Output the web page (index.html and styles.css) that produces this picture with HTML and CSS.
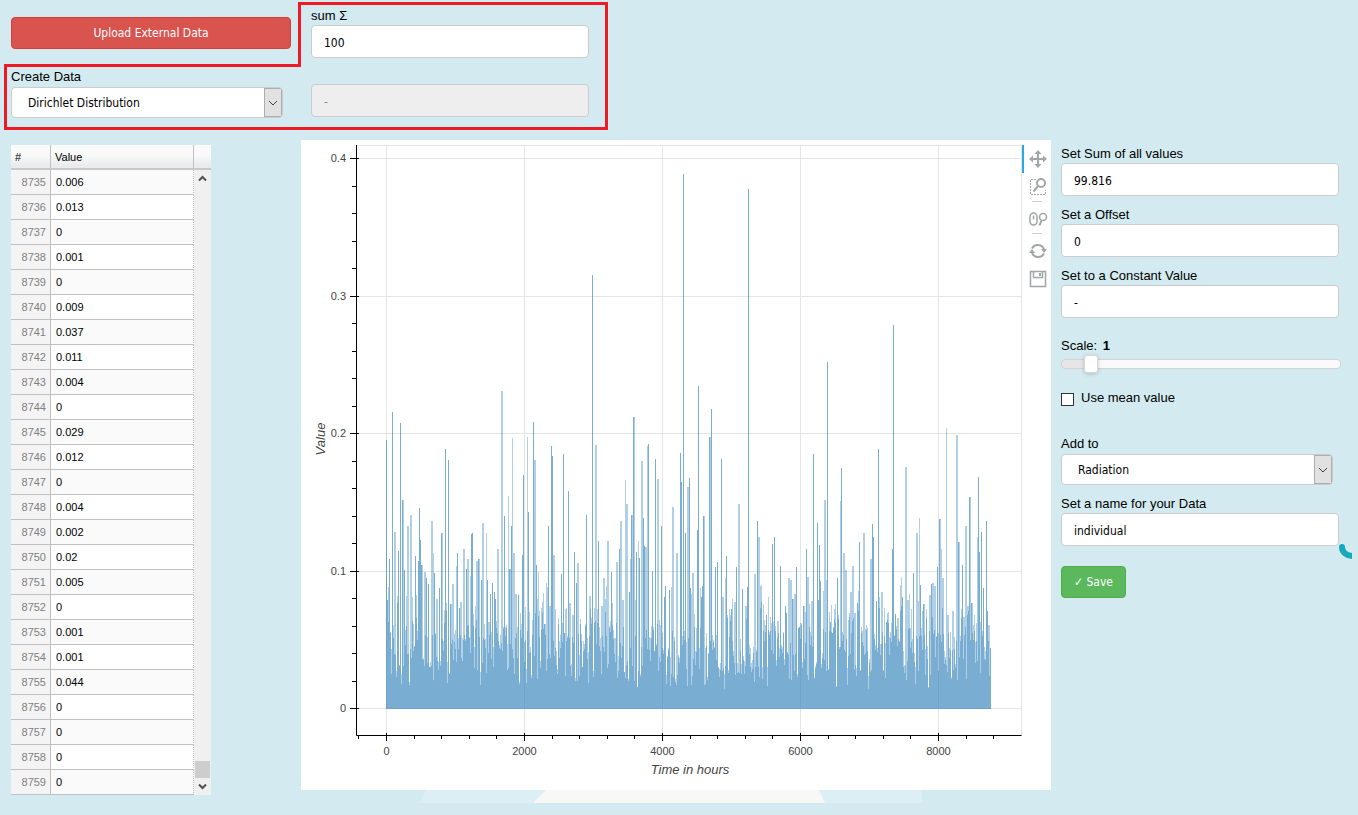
FILE: index.html
```html
<!DOCTYPE html>
<html lang="en">
<head>
    <meta charset="UTF-8">
    <meta name="viewport" content="width=device-width, initial-scale=1.0">
    <title>Create Data</title>
    <link rel="stylesheet" href="styles.css">
</head>
<body>
    <header class="create">
        <div class="create-left">
            <button class="btn btn-danger" type="button">Upload External Data</button>
            <div class="field">
                <label for="distribution">Create Data</label>
                <div class="select-box">
                    <select id="distribution"><option>Dirichlet Distribution</option></select>
                    <span class="select-arrow"><svg width="10" height="6" viewBox="0 0 10 6"><path d="M1 1l4 4 4-4"/></svg></span>
                </div>
            </div>
        </div>
        <div class="create-right">
            <div class="field">
                <label for="sum">sum Σ</label>
                <input class="text" id="sum" type="text" value="100">
            </div>
            <input class="text" type="text" value="-" aria-label="Second parameter" disabled>
        </div>
        <svg class="outline" width="610" height="132" viewBox="0 0 610 132">
            <path d="M299.5 3.5H606.5V128.5H5.5V65.5H299.5Z"/>
        </svg>
    </header>

    <main class="main">
        <div class="grid">
            <table class="data">
                <thead>
                    <tr><th class="index">#</th><th>Value</th></tr>
                </thead>
                <tbody>
                    <tr><td>8735</td><td>0.006</td></tr>
                    <tr><td>8736</td><td>0.013</td></tr>
                    <tr><td>8737</td><td>0</td></tr>
                    <tr><td>8738</td><td>0.001</td></tr>
                    <tr><td>8739</td><td>0</td></tr>
                    <tr><td>8740</td><td>0.009</td></tr>
                    <tr><td>8741</td><td>0.037</td></tr>
                    <tr><td>8742</td><td>0.011</td></tr>
                    <tr><td>8743</td><td>0.004</td></tr>
                    <tr><td>8744</td><td>0</td></tr>
                    <tr><td>8745</td><td>0.029</td></tr>
                    <tr><td>8746</td><td>0.012</td></tr>
                    <tr><td>8747</td><td>0</td></tr>
                    <tr><td>8748</td><td>0.004</td></tr>
                    <tr><td>8749</td><td>0.002</td></tr>
                    <tr><td>8750</td><td>0.02</td></tr>
                    <tr><td>8751</td><td>0.005</td></tr>
                    <tr><td>8752</td><td>0</td></tr>
                    <tr><td>8753</td><td>0.001</td></tr>
                    <tr><td>8754</td><td>0.001</td></tr>
                    <tr><td>8755</td><td>0.044</td></tr>
                    <tr><td>8756</td><td>0</td></tr>
                    <tr><td>8757</td><td>0</td></tr>
                    <tr><td>8758</td><td>0</td></tr>
                    <tr><td>8759</td><td>0</td></tr>
                </tbody>
            </table>
            <div class="scroll">
                <div class="scroll-head"></div>
                <button class="scroll-btn" type="button" aria-label="Scroll up"><svg width="9" height="7" viewBox="0 0 9 7"><path d="M1 5.5l3.500-3.500 3.500 3.500"/></svg></button>
                <div class="scroll-track"><div class="scroll-thumb"></div></div>
                <button class="scroll-btn" type="button" aria-label="Scroll down"><svg width="9" height="7" viewBox="0 0 9 7"><path d="M1 1.500l3.500 3.500 3.500-3.500"/></svg></button>
            </div>
        </div>

        <div class="chart-col">
            <div class="chart">
                <svg class="plot" viewBox="0 0 721 650">
                    <path class="gridline" id="gridlines"/>
                    <path class="series" id="series"/>
                    <path class="series soft" id="seriesSoft"/>
                    <path class="axis" id="axes"/>
                    <g id="ticks" class="tick-labels"></g>
                    <text class="axis-title" x="389" y="634">Time in hours</text>
                    <text class="axis-title" transform="translate(24 299) rotate(-90)">Value</text>
                </svg>
                <div class="toolbar">
                    <button class="tool active" type="button" aria-label="Pan">
                        <svg width="18" height="18" viewBox="0 0 18 18"><path class="thick" d="M9 3v12M3 9h12"/><path class="solid" d="M9 0l3.500 4h-7zM9 18l3.500-4h-7zM0 9l4-3.500v7zM18 9l-4-3.500v7z"/></svg>
                    </button>
                    <button class="tool" type="button" aria-label="Box Zoom">
                        <svg width="18" height="18" viewBox="0 0 18 18"><path class="dash" d="M7 1.500H1.500v15h15V12"/><circle class="thick" cx="12" cy="5" r="4"/><path class="thick" d="M9 8l-4.500 5.500"/></svg>
                    </button>
                    <span class="sep"></span>
                    <button class="tool" type="button" aria-label="Wheel Zoom">
                        <svg width="20" height="16" viewBox="0 0 20 16"><rect class="line" x="2" y="2" width="7" height="12" rx="3.500"/><path class="line" d="M5.500 4.500v4"/><circle class="line" cx="15" cy="6" r="3.500"/><path class="thick" d="M13.500 9.500l-2 5"/></svg>
                    </button>
                    <span class="sep"></span>
                    <button class="tool" type="button" aria-label="Reset">
                        <svg width="18" height="18" viewBox="0 0 18 18"><path class="thick" d="M3 6.500a6.500 6.500 0 0 1 12 1M15 11.500a6.500 6.500 0 0 1-12-1"/><path class="solid" d="M12 7h6l-3 4zM0 11h6l-3-4z"/></svg>
                    </button>
                    <button class="tool" type="button" aria-label="Save plot">
                        <svg width="18" height="18" viewBox="0 0 18 18"><path class="line" d="M1.500 1.500h15v15h-15zM4.500 1.500v6h9v-6"/><path class="solid" d="M10 3h2v3h-2z"/></svg>
                    </button>
                </div>
            </div>
            <svg class="backdrop" viewBox="0 0 750 13">
                <path class="band" d="M125 0H620L622 13H118Z"/>
                <path class="sheet" d="M245 0H518L524 13H232Z"/>
            </svg>
        </div>

        <form class="panel">
            <div class="field">
                <label for="total">Set Sum of all values</label>
                <input class="text" id="total" type="text" value="99.816">
            </div>
            <div class="field">
                <label for="offset">Set a Offset</label>
                <input class="text" id="offset" type="text" value="0">
            </div>
            <div class="field">
                <label for="constant">Set to a Constant Value</label>
                <input class="text" id="constant" type="text" value="-">
            </div>
            <div class="field scale">
                <label for="scale">Scale: <b>1</b></label>
                <input class="slider" id="scale" type="range" min="0" max="12" value="1">
            </div>
            <div class="check">
                <input id="mean" type="checkbox">
                <label for="mean">Use mean value</label>
            </div>
            <div class="field">
                <label for="addTo">Add to</label>
                <div class="select-box">
                    <select id="addTo"><option>Radiation</option></select>
                    <span class="select-arrow"><svg width="10" height="6" viewBox="0 0 10 6"><path d="M1 1l4 4 4-4"/></svg></span>
                </div>
            </div>
            <div class="field name">
                <label for="name">Set a name for your Data</label>
                <input class="text" id="name" type="text" value="individual">
                <svg class="arc" width="14" height="20" viewBox="0 0 14 20"><path d="M4 5c0 5 4 9 12 9"/></svg>
            </div>
            <button class="btn btn-success" type="button">✓ Save</button>
        </form>
    </main>

    <script src="plot.js"></script>
</body>
</html>
```
FILE: styles.css
```css
body {
    margin: 0;
    background-color: #d3ebf0;
    color: #000;
    font-family: "Liberation Sans", Arial, sans-serif;
    font-size: 13px;
    line-height: 18px;
}
label {
    display: block;
}
button, input, select {
    box-sizing: border-box;
    margin: 0;
    font-family: "DejaVu Sans Condensed", "DejaVu Sans", sans-serif;
    font-size: 12px;
}

/* top controls */
.create {
    position: relative;
    display: flex;
    gap: 20px;
    height: 140px;
    padding-left: 11px;
    box-sizing: border-box;
}
.create-left {
    width: 280px;
    padding-top: 17px;
}
.create-right {
    width: 280px;
    padding-top: 7px;
}
.create-right .field {
    margin-bottom: 26px;
}
.outline {
    position: absolute;
    left: 0;
    top: 0;
    fill: none;
    stroke: #ed1c24;
    stroke-width: 3;
    pointer-events: none;
}
.btn {
    height: 32px;
    border-radius: 4px;
    color: #fff;
    cursor: pointer;
}
.btn-danger {
    display: block;
    width: 100%;
    margin-bottom: 19px;
    background-color: #d9534f;
    border: 1px solid #d43f3a;
}
.btn-success {
    width: 65px;
    margin-top: 10px;
    padding: 0;
    background-color: #5cb85c;
    border: 1px solid #4cae4c;
}
.text {
    display: block;
    width: calc(100% - 2px);
    height: 33px;
    padding: 2px 12px 0;
    background-color: #fff;
    border: 1px solid #ccc;
    border-radius: 4px;
    color: #000;
}
.text:disabled {
    background-color: #eee;
    color: #888;
}
.select-box {
    display: flex;
    width: 272px;
    height: 31px;
    margin-top: 1px;
    box-sizing: border-box;
    background-color: #fff;
    border: 1px solid #ccc;
    border-radius: 4px;
    overflow: hidden;
}
.select-box select {
    flex: 1;
    appearance: none;
    padding: 0 16px;
    background: none;
    border: none;
    color: #000;
}
.select-arrow {
    display: flex;
    align-items: center;
    justify-content: center;
    width: 16px;
    background-color: #e1e1e1;
    border: 1px solid #adadad;
    fill: none;
    stroke: #444;
    pointer-events: none;
}

/* main area */
.main {
    display: flex;
    align-items: flex-start;
    padding: 0 17px 0 11px;
}
.grid {
    display: flex;
    flex: none;
    width: 200px;
    margin: 5px 90px 0 0;
    font-size: 11px;
}
.data {
    width: 183px;
    border-spacing: 0;
    table-layout: fixed;
}
.data th, .scroll-head {
    height: 25px;
    box-sizing: border-box;
    background: linear-gradient(#fafafa 40%, #e9ebed 90%);
    border-bottom: 2px solid #c8c8c8;
}
.data th {
    padding: 0 4px;
    border-right: 1px solid silver;
    font-weight: normal;
    text-align: left;
}
.data .index {
    width: 40px;
    box-sizing: border-box;
}
.data td {
    height: 25px;
    box-sizing: border-box;
    padding: 0 5px;
    background-color: #fff;
    border-right: 1px dotted silver;
    border-bottom: 1px solid silver;
}
.data tr:nth-child(odd) td {
    background-color: #fafafa;
}
.data tr td:first-child {
    padding-right: 4px;
    background-color: #f4f4f4;
    border-right: 1px solid silver;
    color: #808080;
    text-align: right;
}
.scroll {
    display: flex;
    flex-direction: column;
    width: 17px;
    background-color: #f0f0f0;
}
.scroll-btn {
    height: 17px;
    padding: 0;
    background: none;
    border: none;
    line-height: 0;
    fill: none;
    stroke: #505050;
    stroke-width: 2;
}
.scroll-track {
    display: flex;
    flex: 1;
    align-items: flex-end;
}
.scroll-thumb {
    width: 15px;
    height: 17px;
    margin-left: 1px;
    background-color: #cdcdcd;
}

/* chart */
.chart-col {
    flex: 1;
    min-width: 0;
}
.chart {
    display: flex;
    background-color: #fff;
}
.plot {
    flex: 1;
    min-width: 0;
}
.gridline {
    fill: none;
    stroke: #e5e5e5;
}
.series {
    fill: none;
    stroke: #1f77b4;
    stroke-opacity: 0.6;
}
.soft {
    stroke-opacity: 0.35;
}
.axis {
    fill: none;
    stroke: #000;
}
.tick-labels, .axis-title {
    font-size: 11px;
    fill: #444;
}
.tick-labels .x {
    text-anchor: middle;
}
.tick-labels .y {
    text-anchor: end;
}
.axis-title {
    font-size: 13px;
    font-style: italic;
    text-anchor: middle;
}
.toolbar {
    display: flex;
    flex-direction: column;
    align-items: center;
    width: 29px;
    padding-top: 5px;
}
.tool {
    display: flex;
    align-items: center;
    justify-content: center;
    width: 29px;
    height: 28px;
    padding: 0;
    background: none;
    border: none;
    border-left: 2px solid transparent;
}
.tool.active {
    border-left-color: #26aae1;
}
.tool svg {
    fill: none;
    stroke: none;
}
.tool .thick {
    stroke: #a1a6a9;
    stroke-width: 2;
}
.tool .line {
    stroke: #a1a6a9;
    stroke-width: 1.5;
}
.tool .dash {
    stroke: #a1a6a9;
    stroke-dasharray: 2 1;
}
.tool .solid {
    fill: #a1a6a9;
}
.sep {
    width: 10px;
    height: 1px;
    margin-bottom: 3px;
    background-color: #ccc;
}
.backdrop {
    display: block;
    width: 100%;
}
.band {
    fill: #dceff5;
}
.sheet {
    fill: #f8f8f7;
}

/* right panel */
.panel {
    flex: none;
    width: 280px;
    margin: 5px 0 0 10px;
}
.panel .field {
    margin-bottom: 10px;
}
.panel .scale {
    margin: 19px 0 16px;
}
.scale b {
    margin-left: 2px;
}
.slider {
    display: block;
    appearance: none;
    width: 100%;
    height: 18px;
    background: none;
}
.slider::-webkit-slider-runnable-track {
    height: 10px;
    box-sizing: border-box;
    background: linear-gradient(to right, #e6e6e6 10%, #fafafa 10%);
    border: 1px solid #d3d3d3;
    border-radius: 4px;
}
.slider::-webkit-slider-thumb {
    appearance: none;
    width: 14px;
    height: 18px;
    margin-top: -5px;
    background-color: #fff;
    border: 1px solid #d9d9d9;
    border-radius: 3px;
    box-shadow: 0 1px 4px rgba(0, 0, 0, 0.2);
}
.check {
    display: flex;
    gap: 7px;
    margin-bottom: 28px;
}
.check input {
    appearance: none;
    width: 13px;
    height: 13px;
    margin-top: 4px;
    background-color: #fff;
    border: 1px solid #333;
}
.name {
    position: relative;
}
.arc {
    position: absolute;
    right: -11px;
    bottom: -16px;
    fill: none;
    stroke: #17a9bb;
    stroke-width: 6;
    stroke-linecap: round;
}
```
FILE: plot.js
```js
// highest bars: [column, height]
const peaks = [
    [0,269],[1,109],[3,150],[6,297],[8,177],[12,158],[14,286],[16,209],[18,139],[21,183],[24,194],[29,153],
    [32,148],[33,201],[34,169],[35,144],[38,137],[40,131],[42,125],[45,188],[47,156],[48,136],[50,110],[53,121],
    [55,176],[59,260],[62,249],[64,105],[66,125],[70,143],[71,156],[73,101],[74,107],[77,160],[80,140],[81,150],
    [84,133],[85,175],[86,176],[90,148],[92,150],[95,129],[96,186],[100,176],[101,129],[104,115],[106,126],
    [108,117],[109,110],[111,160],[115,318],[118,193],[122,213],[123,140],[125,183],[126,271],[127,156],[129,115],
    [132,114],[136,154],[137,234],[141,272],[142,197],[147,287],[148,249],[150,144],[151,110],[158,85],[160,126],
    [161,122],[162,183],[163,103],[165,263],[166,253],[167,154],[175,135],[177,255],[179,100],[182,218],[183,106],
    [186,94],[188,157],[190,126],[191,146],[200,194],[203,113],[206,434],[209,264],[212,168],[215,103],[217,131],
    [220,123],[221,168],[224,88],[225,137],[230,147],[233,160],[234,188],[236,109],[239,229],[240,205],[243,117],
    [244,150],[245,194],[247,292],[250,157],[252,168],[253,151],[255,248],[257,191],[258,163],[259,162],[261,263],
    [262,265],[266,138],[269,250],[271,230],[275,183],[278,112],[279,123],[283,119],[285,122],[286,202],[290,156],
    [294,256],[295,227],[297,535],[299,176],[301,222],[303,231],[304,121],[305,115],[306,136],[311,179],[312,323],
    [315,112],[316,123],[317,193],[323,272],[325,300],[329,142],[331,147],[335,250],[336,112],[339,131],[340,153],
    [345,100],[348,107],[350,142],[352,205],[356,120],[359,103],[361,122],[362,520],[368,135],[371,188],[372,172],
    [374,123],[380,94],[386,165],[388,172],[391,88],[394,143],[399,103],[400,96],[402,131],[404,129],[406,110],
    [408,115],[410,142],[412,81],[417,103],[420,160],[421,132],[425,108],[427,255],[431,186],[432,109],[433,164],
    [434,128],[438,209],[440,129],[441,347],[444,87],[446,76],[451,131],[454,208],[455,241],[457,156],[459,139],
    [464,117],[466,143],[468,96],[471,106],[473,167],[477,176],[484,150],[486,185],[487,172],[490,108],[492,260],
    [495,117],[500,87],[506,160],[507,384],[509,95],[511,91],[515,132],[516,112],[519,242],[521,109],[527,136],
    [530,176],[532,108],[533,191],[534,124],[537,105],[543,114],[545,125],[546,126],[548,123],[551,142],[553,190],
    [555,160],[556,131],[560,281],[561,94],[566,98],[570,274],[572,167],[576,144],[577,92],[579,183],[583,212],
    [585,106],[591,172],[592,232],[593,157],[594,87],[595,177],[597,121],[600,188],[601,98],[602,84],[604,61]
];

const left = 85.5;
const base = 569;
const columns = 605;

// small values between the peaks, same sequence on every load
let seed = 42;
function random() {
    seed = (seed * 16807) % 2147483647;
    return seed / 2147483647;
}

const heights = [];
for (let i = 0; i < columns; i++) {
    heights.push(Math.round(18 + random() * 60 + random() * random() * 40));
}
const soft = heights.map(h => h + Math.round(random() * random() * 50));
peaks.forEach(([col, height]) => {
    // some bars fall between two columns and are drawn lighter
    const between = height < 330 && random() < 0.4;
    soft[col] = height;
    if (!between) {
        heights[col] = height;
    }
    if (col + 1 < columns && (between || random() < 0.2)) {
        soft[col + 1] = Math.max(soft[col + 1], height);
    }
});

let series = '';
let seriesSoft = '';
for (let i = 0; i < columns; i++) {
    series += `M${left + i} ${base}V${base - heights[i]}`;
    if (soft[i] > heights[i]) {
        seriesSoft += `M${left + i} ${base - heights[i]}V${base - soft[i]}`;
    }
}
document.getElementById('series').setAttribute('d', series);
document.getElementById('seriesSoft').setAttribute('d', seriesSoft);

// axes, grid and tick labels
let grid = 'M55.5 5.5H720.5V595.5';
let axes = 'M55.5 5V595.5H720.5';
let labels = '';
for (let i = -1; i <= 22; i++) {
    const x = Math.round(85 + i * 27.6) + 0.5;
    if (i % 5 === 0) {
        grid += `M${x} 5V595`;
        axes += `M${x} 593V601`;
        labels += `<text class="x" x="${x}" y="615">${i * 400}</text>`;
    } else {
        axes += `M${x} 595V599`;
    }
}
for (let i = 0; i <= 20; i++) {
    const y = Math.round(568 - i * 27.5) + 0.5;
    if (i % 5 === 0) {
        grid += `M56 ${y}H720`;
        axes += `M49 ${y}H58`;
        labels += `<text class="y" x="45" y="${y + 3.5}">${i / 50}</text>`;
    } else {
        axes += `M51 ${y}H56`;
    }
}
document.getElementById('gridlines').setAttribute('d', grid);
document.getElementById('axes').setAttribute('d', axes);
document.getElementById('ticks').innerHTML = labels;
```
